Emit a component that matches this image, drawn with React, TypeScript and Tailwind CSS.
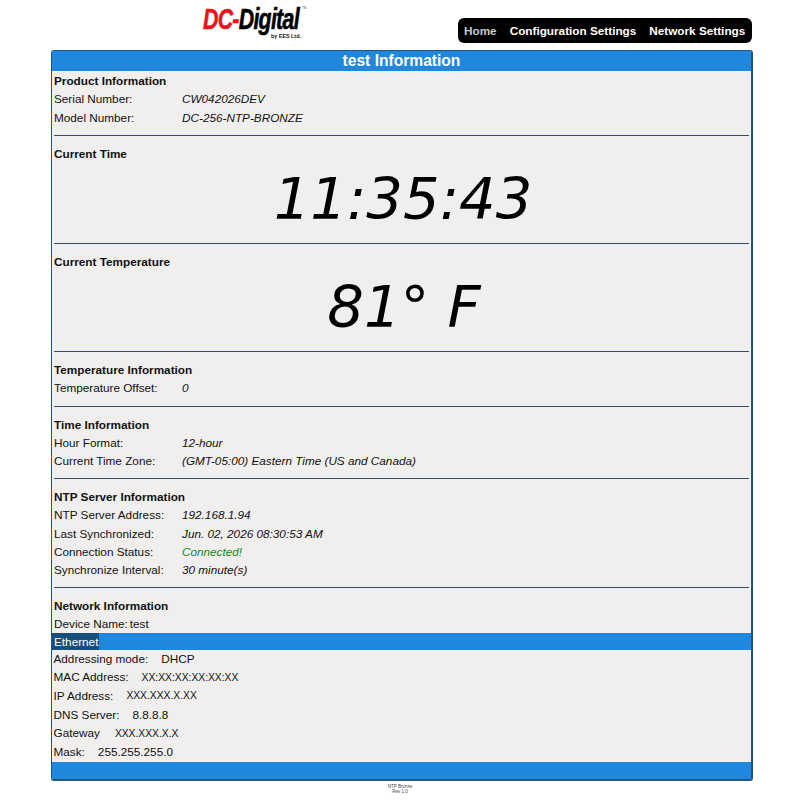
function Row({ label, value, valueClass = "" }: { label: string; value: string; valueClass?: string }) {
  return (
    <div className="flex h-[18.2px] items-center pl-[2px]">
      <span className="w-[128px]">{label}</span>
      <span className={`italic ${valueClass}`}>{value}</span>
    </div>
  );
}

function Heading({ children }: { children: string }) {
  return <div className="flex h-[18.2px] items-center pl-[2px] font-bold">{children}</div>;
}

function Divider() {
  return <hr className="mx-[2px] my-[8.5px] border-0 border-t border-[#2f4f6b]" />;
}

function PlainRow({ label, value, valueClass = "" }: { label: string; value: string; valueClass?: string }) {
  return (
    <div className="flex h-[18.7px] items-center gap-[13px] pl-[1.5px]">
      <span>{label}</span>
      <span className={valueClass}>{value}</span>
    </div>
  );
}

export default function App() {
  return (
    <div className="h-[800px] w-[800px] bg-white font-['Liberation_Sans',Arial,sans-serif] text-[11.75px] text-[#111]">
      <header className="flex h-[50px] pl-[203px]">
        <div className="relative mt-[6px] h-[36px] w-[104px]">
          <div className="mt-[2px] flex origin-left scale-x-[0.71] items-baseline whitespace-nowrap text-[30px] leading-[22px] font-black tracking-[-1px] italic [-webkit-text-stroke:0.6px]">
            <span className="text-[#e8141c]">DC-</span>
            <span className="text-black">Digital</span>
          </div>
          <span className="absolute top-[27px] left-[68px] whitespace-nowrap text-[5.4px] leading-[6px] font-bold">by EES Ltd.</span>
          <span className="absolute top-0 left-[99px] text-[3px] text-[#555]">TM</span>
        </div>
        <nav className="mt-[18px] ml-[151px] flex h-[25px] w-[294px] items-center gap-[13px] whitespace-nowrap rounded-[6px] bg-black pl-[6px] font-bold text-white">
          <span className="text-[#c9c9c9]">Home</span>
          <span>Configuration Settings</span>
          <span>Network Settings</span>
        </nav>
      </header>

      <main className="ml-[51px] h-[731px] w-[702px] overflow-hidden rounded-[3px] border border-r-2 border-b-2 border-[#1f5685] bg-[#f0efee]">
        <div className="mb-[1px] flex h-[20px] items-center justify-center bg-[#1f88dc] text-[15.6px] font-bold text-white">
          test Information
        </div>

        <Heading>Product Information</Heading>
        <Row label="Serial Number:" value="CW042026DEV" />
        <Row label="Model Number:" value="DC-256-NTP-BRONZE" />
        <Divider />

        <Heading>Current Time</Heading>
        <div className="flex h-[72px] items-center justify-center pt-[3px] pl-[3px] font-['DejaVu_Sans',sans-serif] text-[57.6px] text-black italic">
          11:35:43
        </div>
        <Divider />

        <Heading>Current Temperature</Heading>
        <div className="flex h-[72px] items-center justify-center pt-[3px] pl-[5px] font-['DejaVu_Sans',sans-serif] text-[57.6px] text-black italic">
          81° F
        </div>
        <Divider />

        <Heading>Temperature Information</Heading>
        <Row label="Temperature Offset:" value="0" />
        <Divider />

        <Heading>Time Information</Heading>
        <Row label="Hour Format:" value="12-hour" />
        <Row label="Current Time Zone:" value="(GMT-05:00) Eastern Time (US and Canada)" />
        <Divider />

        <Heading>NTP Server Information</Heading>
        <Row label="NTP Server Address:" value="192.168.1.94" />
        <Row label="Last Synchronized:" value="Jun. 02, 2026 08:30:53 AM" />
        <Row label="Connection Status:" value="Connected!" valueClass="text-[#118a11]" />
        <Row label="Synchronize Interval:" value="30 minute(s)" />
        <Divider />

        <Heading>Network Information</Heading>
        <div className="flex h-[18.2px] items-center gap-[2px] pl-[2px]">
          <span>Device Name:</span>
          <span>test</span>
        </div>
        <div className="flex h-[17px] bg-[#1f88dc] text-white">
          <span className="flex items-center bg-[#164f7c] pr-[1px] pl-[2px]">Ethernet</span>
        </div>
        <div className="-mt-[1px]">
          <PlainRow label="Addressing mode:" value="DHCP" />
          <PlainRow label="MAC Address:" value="XX:XX:XX:XX:XX:XX" valueClass="text-[10.3px]" />
          <PlainRow label="IP Address:" value="XXX.XXX.X.XX" valueClass="text-[10.3px]" />
          <PlainRow label="DNS Server:" value="8.8.8.8" />
          <PlainRow label="Gateway" value="XXX.XXX.X.X" valueClass="ml-[2px] text-[10.3px]" />
          <PlainRow label="Mask:" value="255.255.255.0" />
        </div>
        <div className="mt-[1px] h-[20px] bg-[#1f88dc]" />
      </main>

      <footer className="mt-[3px] text-center text-[4.5px] leading-[5px] text-[#444]">
        <div>NTP Bronze</div>
        <div>Rev 1.0</div>
      </footer>
    </div>
  );
}
